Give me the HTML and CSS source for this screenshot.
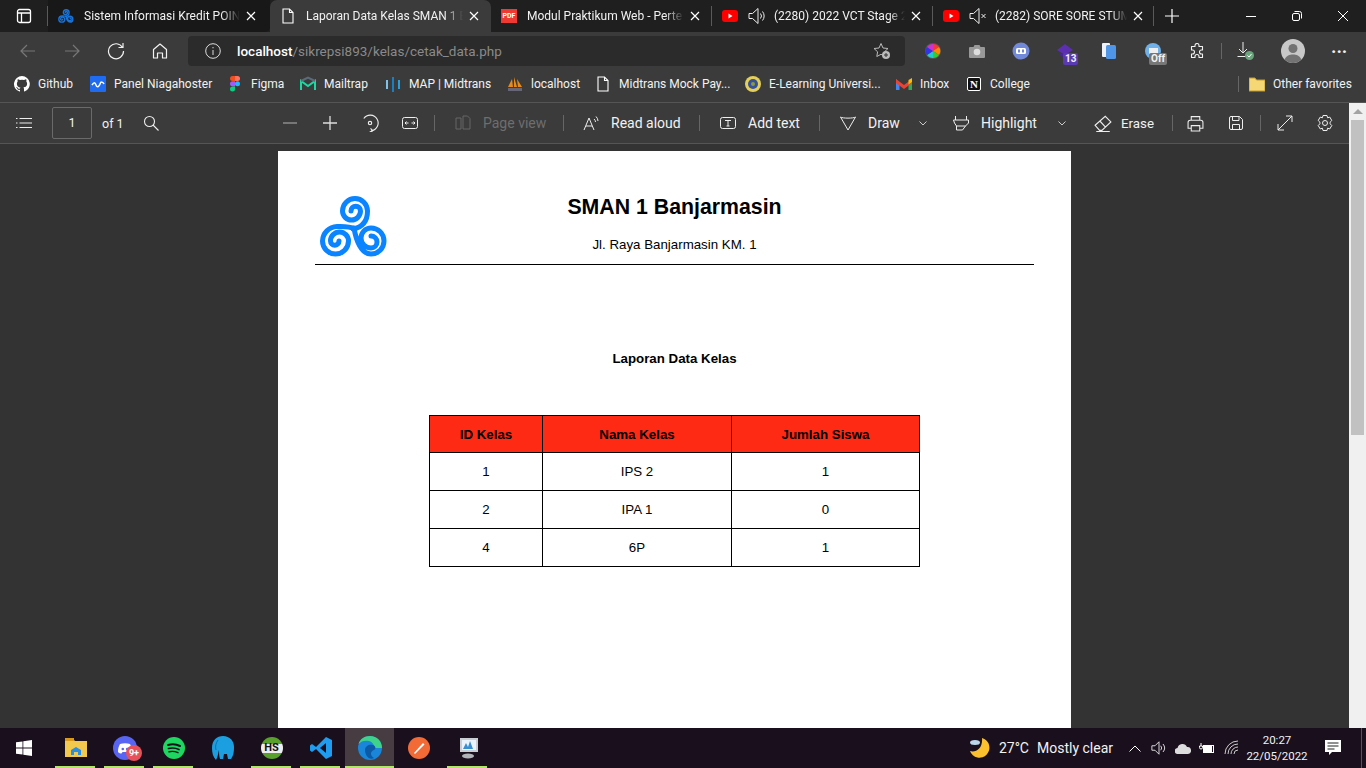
FILE: index.html
```html
<!DOCTYPE html>
<html lang="en">
<head>
  <meta charset="UTF-8">
  <title>Laporan Data Kelas SMAN 1 Banjarmasin</title>
  <link rel="stylesheet" href="styles.css">
</head>
<body>
  <!-- Tab strip -->
  <div class="tabstrip">
    <div class="win-btn"><svg width="16" height="16" viewBox="0 0 16 16" fill="none" stroke="#fff" stroke-width="1.3"><rect x="1.5" y="1.5" width="13" height="13" rx="2"/><path d="M1.5 5h13M5.5 5v9.5"/></svg></div>
    <span class="tab-sep"></span>
    <div class="tab tab-first">
      <svg class="tab-icon" viewBox="0 0 70 64" fill="none" stroke="#1a73d8" stroke-width="6" stroke-linecap="round"><path d="M34 34C44 32 48.5 26 48.5 17A12.5 12.5 0 0 0 23.5 17A9 9 0 0 0 41.5 17A4.75 4.75 0 0 0 32 17"/><path d="M36 34C30 31 24 31.5 18 31.5A15 15 0 0 0 3.5 46A13 13 0 0 0 29.5 46A9 9 0 0 0 11.5 46A4.25 4.25 0 0 0 20 46"/><path d="M35 33C37 45 42 59 52 59A13 13 0 0 0 52 33A10 10 0 0 0 52 53A6 6 0 0 0 52 41"/></svg>
      <span class="tab-title">Sistem Informasi Kredit POIN</span>
      <svg class="tab-close" viewBox="0 0 10 10" stroke="#fff" stroke-width="1.2"><path d="M1 1l8 8M9 1L1 9"/></svg>
    </div>
    <div class="tab tab-active">
      <svg class="tab-icon" viewBox="0 0 16 16" fill="none" stroke="#fff" stroke-width="1.1"><path d="M3 1h6.5L13 4.5V15H3zM9.5 1v3.5H13"/></svg>
      <span class="tab-title">Laporan Data Kelas SMAN 1 B</span>
      <svg class="tab-close" viewBox="0 0 10 10" stroke="#fff" stroke-width="1.2"><path d="M1 1l8 8M9 1L1 9"/></svg>
    </div>
    <div class="tab">
      <span class="pdf-icon">PDF</span>
      <span class="tab-title">Modul Praktikum Web - Perte</span>
      <svg class="tab-close" viewBox="0 0 10 10" stroke="#fff" stroke-width="1.2"><path d="M1 1l8 8M9 1L1 9"/></svg>
    </div>
    <span class="tab-sep"></span>
    <div class="tab">
      <svg class="tab-icon" viewBox="0 0 16 12"><rect width="16" height="12" rx="3" fill="#f00"/><path d="M6.5 3.5v5l4-2.5z" fill="#fff"/></svg>
      <svg class="tab-audio" viewBox="0 0 18 18" fill="none" stroke="#eee" stroke-width="1"><path d="M1 6.5h3.5L10 1.5v15l-5.5-5H1zM12.5 6.5a4 4 0 0 1 0 5M14.5 4.5a7 7 0 0 1 0 9"/></svg>
      <span class="tab-title">(2280) 2022 VCT Stage 2</span>
      <svg class="tab-close" viewBox="0 0 10 10" stroke="#fff" stroke-width="1.2"><path d="M1 1l8 8M9 1L1 9"/></svg>
    </div>
    <span class="tab-sep"></span>
    <div class="tab tab-last">
      <svg class="tab-icon" viewBox="0 0 16 12"><rect width="16" height="12" rx="3" fill="#f00"/><path d="M6.5 3.5v5l4-2.5z" fill="#fff"/></svg>
      <svg class="tab-audio" viewBox="0 0 18 18" fill="none" stroke="#eee" stroke-width="1"><path d="M1 6.5h3.5L10 1.5v15l-5.5-5H1zM12.5 7l4 4M16.5 7l-4 4"/></svg>
      <span class="tab-title">(2282) SORE SORE STUM</span>
      <svg class="tab-close" viewBox="0 0 10 10" stroke="#fff" stroke-width="1.2"><path d="M1 1l8 8M9 1L1 9"/></svg>
    </div>
    <span class="tab-sep"></span>
    <div class="new-tab"><svg width="16" height="16" viewBox="0 0 16 16" stroke="#fff" stroke-width="1.2"><path d="M8 1v14M1 8h14"/></svg></div>
    <div class="win-controls">
      <div class="win-control"><svg width="12" height="12" viewBox="0 0 12 12" stroke="#fff"><path d="M1 6.5h10"/></svg></div>
      <div class="win-control"><svg width="12" height="12" viewBox="0 0 12 12" fill="none" stroke="#fff"><rect x="1.5" y="3.5" width="7" height="7" rx="1.5"/><path d="M3.5 1.5h5a2 2 0 0 1 2 2v5"/></svg></div>
      <div class="win-control"><svg width="12" height="12" viewBox="0 0 12 12" stroke="#fff"><path d="M1 1l10 10M11 1L1 11"/></svg></div>
    </div>
  </div>

  <!-- Address bar row -->
  <div class="navbar">
    <div class="nav-btn"><svg width="18" height="18" viewBox="0 0 18 18" fill="none" stroke="#777" stroke-width="1.2"><path d="M16 9H2M8 3L2 9l6 6"/></svg></div>
    <div class="nav-btn"><svg width="18" height="18" viewBox="0 0 18 18" fill="none" stroke="#777" stroke-width="1.2"><path d="M2 9h14M10 3l6 6-6 6"/></svg></div>
    <div class="nav-btn"><svg width="18" height="18" viewBox="0 0 18 18" fill="none" stroke="#f2f2f2" stroke-width="1.2"><path d="M15.5 5.5A7.5 7.5 0 1 0 16.5 9M16 1v4.5h-4.5"/></svg></div>
    <div class="nav-btn"><svg width="18" height="18" viewBox="0 0 18 18" fill="none" stroke="#f2f2f2" stroke-width="1.2"><path d="M2.5 7.5L9 2l6.5 5.5V16h-4v-5h-5v5h-4z" stroke-linejoin="round"/></svg></div>
    <div class="address">
      <svg class="address-info" width="16" height="16" viewBox="0 0 16 16" fill="none" stroke="#ddd"><circle cx="8" cy="8" r="7.3"/><path d="M8 7v5M8 4v1.3"/></svg>
      <span class="url"><b>localhost</b>/sikrepsi893/kelas/cetak_data.php</span>
      <svg class="address-star" width="18" height="18" viewBox="0 0 18 18" fill="none" stroke="#bbb"><path d="M8 1.5l2 4.5 5 .5-3.5 3.3.6 4.7L8 12.3 3.8 14.5l.8-4.7L1 6.5l5-.5z"/><circle cx="13" cy="13" r="4" fill="#bbb" stroke="none"/><path d="M13 11v4M11 13h4" stroke="#333"/></svg>
    </div>
    <div class="ext"><svg width="18" height="18" viewBox="0 0 18 18"><circle cx="9" cy="9" r="8" fill="#555"/><path d="M9 9V2a7 7 0 0 1 6 3z" fill="#f33"/><path d="M9 9l6-4a7 7 0 0 1 0 8z" fill="#f80"/><path d="M9 9l6 4a7 7 0 0 1-6 3z" fill="#3c3"/><path d="M9 9v7a7 7 0 0 1-6-3z" fill="#2cc"/><path d="M9 9l-6 4a7 7 0 0 1 0-8z" fill="#33e"/><path d="M9 9L3 5a7 7 0 0 1 6-3z" fill="#c3c"/></svg></div>
    <div class="ext"><svg width="16" height="14" viewBox="0 0 16 14"><path d="M1 3h3.5l1-2h5l1 2H15a1 1 0 0 1 1 1v9a1 1 0 0 1-1 1H1a1 1 0 0 1-1-1V4a1 1 0 0 1 1-1z" fill="#999"/><circle cx="8" cy="8" r="3.3" fill="#ddd"/></svg></div>
    <div class="ext"><svg width="18" height="18" viewBox="0 0 18 18"><circle cx="9" cy="9" r="8.5" fill="#7289da"/><rect x="4" y="6" width="10" height="6" rx="1.5" fill="#fff"/><rect x="6" y="7.5" width="2" height="3" fill="#7289da"/><rect x="10" y="7.5" width="2" height="3" fill="#7289da"/></svg></div>
    <div class="ext"><svg width="16" height="14" viewBox="0 0 16 14"><path d="M8 0l8 6-8 5-8-5z" fill="#5b2fb0"/><path d="M3 8.5v3l5 2.5 5-2.5v-3l-5 3z" fill="#4a2596"/></svg><span class="badge-purple">13</span></div>
    <div class="ext"><svg width="14" height="16" viewBox="0 0 14 16"><rect width="8" height="14" rx="1" fill="#eef3fb"/><rect x="4" y="2" width="10" height="14" rx="1.5" fill="#4f95e8"/></svg></div>
    <div class="ext"><svg width="16" height="16" viewBox="0 0 16 16"><circle cx="8" cy="8" r="8" fill="#6fb1e8"/><rect x="4" y="5" width="9" height="6" fill="#eee"/></svg><span class="badge-off">Off</span></div>
    <div class="ext"><svg width="16" height="16" viewBox="0 0 16 16" fill="none" stroke="#f2f2f2" stroke-width="1.1"><path d="M6 2.5a2 2 0 0 1 4 0V3.5h3.5V7h-1a2 2 0 0 0 0 4h1v3.5H10v-1a2 2 0 0 0-4 0v1H2.5V11h1a2 2 0 0 0 0-4h-1V3.5H6z" stroke-linejoin="round"/></svg></div>
    <span class="nav-sep"></span>
    <div class="nav-download"><svg width="18" height="20" viewBox="0 0 18 20" fill="none" stroke="#eee"><path d="M6 1v11M2 8l4 4 4-4M0.5 15.5h8"/><circle cx="12.5" cy="14.5" r="4.5" fill="#6aa67c" stroke="none"/><path d="M10.5 14.5l1.5 1.5 2.5-3" stroke="#fff"/></svg></div>
    <div class="avatar"><svg width="24" height="24" viewBox="0 0 24 24"><circle cx="12" cy="12" r="12" fill="#c8c8c8"/><circle cx="12" cy="9.5" r="4.5" fill="#737373"/><path d="M3.5 20.5c2-4 5-5 8.5-5s6.5 1 8.5 5a12 12 0 0 1-17 0z" fill="#737373"/></svg></div>
    <div class="dots">···</div>
  </div>

  <!-- Favorites -->
  <div class="favbar">
    <div class="fav"><svg class="fav-icon" viewBox="0 0 16 16"><path fill="#fff" d="M8 0a8 8 0 0 0-2.5 15.6c.4.1.5-.2.5-.4v-1.4c-2.2.5-2.7-1-2.7-1-.4-.9-.9-1.2-.9-1.2-.7-.5.1-.5.1-.5.8.1 1.2.8 1.2.8.7 1.2 1.9.9 2.3.7.1-.5.3-.9.5-1.1-1.8-.2-3.6-.9-3.6-4 0-.9.3-1.6.8-2.1-.1-.2-.4-1 .1-2.1 0 0 .7-.2 2.2.8a7.6 7.6 0 0 1 4 0c1.5-1 2.2-.8 2.2-.8.4 1.1.2 1.9.1 2.1.5.6.8 1.3.8 2.1 0 3.1-1.9 3.7-3.7 3.9.3.3.6.7.6 1.5v2.2c0 .2.1.5.6.4A8 8 0 0 0 8 0z"/></svg><span>Github</span></div>
    <div class="fav"><svg class="fav-icon" viewBox="0 0 16 16" fill="none"><rect width="16" height="16" rx="1" fill="#1f6cf2"/><path d="M2 9c2-3 3-3 4 0s3 2 4-1 3-2 4 0" stroke="#fff" stroke-width="1.5"/></svg><span>Panel Niagahoster</span></div>
    <div class="fav"><svg class="fav-icon" viewBox="0 0 16 16"><path d="M5.5 0H8v5H5.5a2.5 2.5 0 0 1 0-5z" fill="#f24e1e"/><path d="M8 0h2.5a2.5 2.5 0 0 1 0 5H8z" fill="#ff7262"/><path d="M8 5.3H5.5a2.5 2.5 0 0 0 0 5H8z" fill="#a259ff"/><circle cx="10.5" cy="7.8" r="2.5" fill="#1abcfe"/><path d="M8 10.6H5.5a2.5 2.5 0 1 0 2.5 2.5z" fill="#0acf83"/></svg><span>Figma</span></div>
    <div class="fav"><svg class="fav-icon" viewBox="0 0 16 16" fill="none" stroke-width="2"><path d="M1 14V5l7 5 7-5v9" stroke="#1ed7a2"/><path d="M1 5l7-3.5L15 5" stroke="#5a6c78"/></svg><span>Mailtrap</span></div>
    <div class="fav"><svg class="fav-icon" viewBox="0 0 16 16"><rect x="1" y="4" width="2" height="9" fill="#7fc1ea"/><rect x="7" y="1" width="2" height="15" fill="#1a7fc1"/><rect x="13" y="4" width="2" height="9" fill="#2b9fdb"/></svg><span>MAP | Midtrans</span></div>
    <div class="fav"><svg class="fav-icon" viewBox="0 0 16 16"><path d="M1 11L5 3l1 8zM7 11V1l3 10zM11 11l-1-8 5 8z" fill="#e88a1a"/><rect x="1" y="12" width="14" height="3" fill="#667"/></svg><span>localhost</span></div>
    <div class="fav"><svg class="fav-icon" viewBox="0 0 16 16" fill="none" stroke="#fff" stroke-width="1.1"><path d="M3 1h6.5L13 4.5V15H3zM9.5 1v3.5H13"/></svg><span>Midtrans Mock Pay...</span></div>
    <div class="fav"><svg class="fav-icon" viewBox="0 0 16 16"><circle cx="8" cy="8" r="8" fill="#e3cf5a"/><circle cx="8" cy="8" r="5" fill="#35509c"/><circle cx="8" cy="8" r="2" fill="#8a9a3c"/></svg><span>E-Learning Universi...</span></div>
    <div class="fav"><svg class="fav-icon" viewBox="0 0 16 14"><path d="M0 2v11h3.5V6z" fill="#4285f4"/><path d="M16 2v11h-3.5V6z" fill="#34a853"/><path d="M0 2l8 6 8-6v4l-8 6-8-6z" fill="#ea4335"/><path d="M12.5 3L16 1v4l-3.5 2.5z" fill="#fbbc04"/></svg><span>Inbox</span></div>
    <div class="fav"><span class="notion">N</span><span>College</span></div>
    <span class="fav-sep"></span>
    <div class="fav fav-other"><svg class="fav-icon" viewBox="0 0 16 14"><path d="M0 1h6l1.5 2H16v11H0z" fill="#f6d776" stroke="#c49a2c"/></svg><span>Other favorites</span></div>
  </div>

  <div class="viewer">
    <div class="viewer-main">
      <!-- PDF toolbar -->
      <div class="pdfbar">
        <div class="pdf-btn"><svg width="16" height="12" viewBox="0 0 16 12" stroke="#eee"><path d="M3.5 1.5H16M3.5 6H16M3.5 10.5H16M0 1.5h1.5M0 6h1.5M0 10.5h1.5"/></svg></div>
        <div class="page-input">1</div>
        <div class="page-of">of 1</div>
        <div class="pdf-btn"><svg width="16" height="16" viewBox="0 0 16 16" fill="none" stroke="#eee" stroke-width="1.1"><circle cx="6.5" cy="6.5" r="5"/><path d="M10 10l5.5 5.5"/></svg></div>
        <span></span>
        <div class="pdf-btn"><svg width="16" height="16" viewBox="0 0 16 16" stroke="#999" stroke-width="1.3"><path d="M1 8h14"/></svg></div>
        <div class="pdf-btn"><svg width="16" height="16" viewBox="0 0 16 16" stroke="#ddd" stroke-width="1.3"><path d="M8 1v14M1 8h14"/></svg></div>
        <div class="pdf-btn"><svg width="18" height="18" viewBox="0 0 16 16" fill="none" stroke="#eee" stroke-width="1"><path d="M9 15A7 7 0 1 0 2.5 4M10.5 15l-2-2.2M10.5 15L7.7 16"/><circle cx="8" cy="8" r="1.5"/></svg></div>
        <div class="pdf-btn"><svg width="16" height="14" viewBox="0 0 16 14" fill="none" stroke="#eee"><rect x=".5" y="1.5" width="15" height="11" rx="2"/><path d="M3 7h3.5M9.5 7H13M3 7l1.5-1.5M3 7l1.5 1.5M13 7l-1.5-1.5M13 7l-1.5 1.5"/></svg></div>
        <span class="pdf-sep sep-a"></span>
        <div class="pdf-tool disabled"><svg width="16" height="16" viewBox="0 0 16 16" fill="none" stroke="#666"><path d="M1 3h5v11H1zM8 1h4.5L15 3.5V14H8z"/></svg><span>Page view</span></div>
        <span class="pdf-sep"></span>
        <div class="pdf-tool tool-read"><svg width="18" height="16" viewBox="0 0 16 16" fill="none" stroke="#eee"><path d="M1 15L6 3l5 12M3 11h6M11 4a4 4 0 0 1 1.5 3M13 1.5a7 7 0 0 1 2 4.5"/></svg><span>Read aloud</span></div>
        <span class="pdf-sep"></span>
        <div class="pdf-tool"><svg width="16" height="14" viewBox="0 0 16 14" fill="none" stroke="#eee"><rect x=".5" y="1.5" width="15" height="11" rx="2"/><path d="M5 4.5h6M8 4.5v5.5M6.5 10h3"/></svg><span>Add text</span></div>
        <span class="pdf-sep"></span>
        <div class="pdf-tool"><svg width="16" height="16" viewBox="0 0 16 16" fill="none" stroke="#eee"><path d="M.5 2L8 15 15.5 2M.5 2c2 1.5 13 1.5 15 0"/></svg><span>Draw</span></div>
        <svg class="chevron" width="8" height="5" viewBox="0 0 8 5" fill="none" stroke="#ccc"><path d="M.5.5L4 4 7.5.5"/></svg>
        <div class="pdf-tool"><svg width="16" height="16" viewBox="0 0 16 16" fill="none" stroke="#eee"><path d="M2.5 1v4M13.5 1v4M.5 5h15v3l-3 3H3.5L1.500 8zM3.5 11v4h6l3-4"/></svg><span>Highlight</span></div>
        <svg class="chevron chevron-b" width="8" height="5" viewBox="0 0 8 5" fill="none" stroke="#ccc"><path d="M.5.5L4 4 7.5.5"/></svg>
        <div class="pdf-tool tool-erase"><svg width="18" height="18" viewBox="0 0 16 16" fill="none" stroke="#eee"><path d="M1 10l9-8 5 5-8 7.5H5zM5 6l5 5.5M2 15.5h12"/></svg><span>Erase</span></div>
        <span class="pdf-sep"></span>
        <div class="pdf-icon-btn"><svg width="17" height="17" viewBox="0 0 16 16" fill="none" stroke="#eee"><path d="M4 5V1.5h8V5M4 12.5H1V7a2 2 0 0 1 2-2h10a2 2 0 0 1 2 2v5.5h-3M4 10h8v5H4z"/></svg></div>
        <div class="pdf-icon-btn"><svg width="16" height="16" viewBox="0 0 16 16" fill="none" stroke="#eee"><path d="M1.500 3a1.500 1.500 0 0 1 1.500-1.500h8.500l3 3V13a1.500 1.500 0 0 1-1.500 1.500H3A1.500 1.500 0 0 1 1.500 13zM4.500 1.500v4h6.500v-4M4.500 14.500V9.500h7v5"/></svg></div>
        <span class="pdf-sep"></span>
        <div class="pdf-icon-btn"><svg width="16" height="16" viewBox="0 0 16 16" fill="none" stroke="#eee"><path d="M1 15L15 1M9 1h6v6M1 9v6h6"/></svg></div>
        <div class="pdf-icon-btn"><svg width="18" height="18" viewBox="0 0 18 18" fill="none" stroke="#eee"><path d="M7 1.5h4l.6 2.3 2.2-.7 2 3.4-1.700 1.700v1.600l1.700 1.700-2 3.400-2.200-.7-.6 2.300H7l-.6-2.300-2.200.7-2-3.400 1.700-1.700V8.200L2.200 6.500l2-3.400 2.200.7z" stroke-linejoin="round"/><circle cx="9" cy="9" r="2.5"/></svg></div>
      </div>

      <!-- Document area -->
      <div class="doc-area">
        <div class="page">
          <div class="kop">
            <svg class="logo" width="70" height="64" viewBox="0 0 70 64" fill="none" stroke="#0a84ff" stroke-width="5" stroke-linecap="round"><path d="M34 34C44 32 48.5 26 48.5 16A12.5 12.5 0 0 0 23.5 16A9 9 0 0 0 41.5 16A4.75 4.75 0 0 0 32 16"/><path d="M36 34C30 31 24 31.5 18 31.5A15 15 0 0 0 3.5 46A13 13 0 0 0 29.5 46A9 9 0 0 0 11.5 46A4.25 4.25 0 0 0 20 46"/><path d="M35 33C37 45 42 59 52 59A13 13 0 0 0 52 33A10 10 0 0 0 52 53A6 6 0 0 0 52 41"/></svg>
            <div class="kop-text">
              <h1>SMAN 1 Banjarmasin</h1>
              <p>Jl. Raya Banjarmasin KM. 1</p>
            </div>
          </div>
          <h2>Laporan Data Kelas</h2>
          <table>
            <thead>
              <tr><th>ID Kelas</th><th>Nama Kelas</th><th>Jumlah Siswa</th></tr>
            </thead>
            <tbody>
              <tr><td>1</td><td>IPS 2</td><td>1</td></tr>
              <tr><td>2</td><td>IPA 1</td><td>0</td></tr>
              <tr><td>4</td><td>6P</td><td>1</td></tr>
            </tbody>
          </table>
        </div>
      </div>
    </div>
    <div class="scrollbar">
      <span class="scroll-up"></span>
      <div class="scroll-thumb"></div>
    </div>
  </div>

  <!-- Windows taskbar -->
  <div class="taskbar">
    <div class="task-start"><svg width="16" height="16" viewBox="0 0 16 16" fill="#fff"><path d="M0 2.3l6.5-.9v6.2H0zM7.3 1.3L16 0v7.600H7.3zM0 8.4h6.5v6.200L0 13.7zM7.3 8.4H16V16l-8.7-1.300z"/></svg></div>
    <div class="task-app running"><svg width="22" height="20" viewBox="0 0 22 20"><path d="M0 1h8l2 2h12v16H0z" fill="#f2c94c"/><rect y="0" width="9" height="3" fill="#d99a1c"/><path d="M6 12l5-3 5 3v5h-3v-3H9v3H6z" fill="#2a8fe0"/></svg></div>
    <div class="task-app running"><span class="discord"><svg width="14" height="11" viewBox="0 0 14 11"><path d="M2 1c3-1 7-1 10 0 1.5 2.5 2 5 2 8-1 1-2.500 1.500-3.500 1.500L9.500 9h-5L3.500 10.500C2.500 10.500 1 10 0 9c0-3 .5-5.500 2-8z" fill="#fff"/><circle cx="4.8" cy="6" r="1.3" fill="#5865f2"/><circle cx="9.2" cy="6" r="1.3" fill="#5865f2"/></svg></span><span class="discord-badge">9+</span></div>
    <div class="task-app running"><svg width="22" height="22" viewBox="0 0 22 22" fill="none" stroke="#10131a" stroke-linecap="round"><circle cx="11" cy="11" r="11" fill="#1ed760" stroke="none"/><path d="M5 8c4-1 8-1 12 1" stroke-width="2"/><path d="M5.5 11.5c4-1 7-.7 10.500 1" stroke-width="1.7"/><path d="M6 14.8c3-.7 6-.5 9 .9" stroke-width="1.4"/></svg></div>
    <div class="task-app"><svg width="24" height="26" viewBox="0 0 24 26"><path d="M1 13C1 5 6 1 12 1c7 0 11 5 11 11 0 6-1 9-3 12h-3l-1-5h-3l-1 5H9c-1-3-1-6-1-9-1 3-1 7-3 10C2 22 1 18 1 13z" fill="#1c9fe0"/><path d="M7 5c-2 3-3 6-2 10" stroke="#0d6fae" fill="none"/></svg></div>
    <div class="task-app running"><span class="heidi">HS</span></div>
    <div class="task-app running"><svg width="24" height="24" viewBox="0 0 24 24"><path d="M17 1l6 3v16l-6 3-10-10-4 3-2-1.5V9.5L3 8l4 3zM17 7l-6 5 6 5z" fill="#1f9cf0"/></svg></div>
    <div class="task-app task-active"><svg width="24" height="24" viewBox="0 0 24 24"><circle cx="12" cy="12" r="12" fill="#1a86d9"/><path d="M24 12c0-7-5-12-12-12C6 0 2 3 .5 8 3 5 7 4 11 5c4 1 6 5 5 7h8z" fill="#3fd28a"/><path d="M7 14c0-4 4-6 8-5 3 1 3 4 1 5-3 1-5 5 0 8-5 3-9-3-9-8z" fill="#0c5aa6"/></svg></div>
    <div class="task-app"><svg width="22" height="22" viewBox="0 0 22 22"><circle cx="11" cy="11" r="11" fill="#f26a36"/><path d="M6 16L15 6l1.5 1.5L7 17z" fill="#fff"/></svg></div>
    <div class="task-app running"><svg width="24" height="24" viewBox="0 0 24 24"><rect x="4" y="2" width="18" height="14" fill="#c9ced3"/><rect x="6" y="4" width="14" height="10" fill="#eaf3fb"/><path d="M7 13l3-6 2 4 2-6 3 8z" fill="#3a8fd0"/><ellipse cx="12" cy="20" rx="6" ry="2.5" fill="#b0b4b8"/></svg></div>
    <div class="tray">
      <svg class="tray-moon" width="20" height="20" viewBox="0 0 20 20"><path d="M12 0a10 10 0 1 1-12 13c6 2 13-3 12-13z" fill="#fbc02d"/><ellipse cx="5" cy="4.5" rx="5" ry="2.5" fill="#bcd6ea"/></svg>
      <span class="tray-temp">27°C</span>
      <span class="tray-weather">Mostly clear</span>
      <svg class="tray-chevron" width="12" height="7" viewBox="0 0 12 7" fill="none" stroke="#fff"><path d="M.5 6.5L6 1l5.5 5.5"/></svg>
      <svg class="tray-icon tray-speaker" width="16" height="16" viewBox="0 0 18 18" fill="none" stroke="#eee"><path d="M1 6.5h3.5L9 2v14l-4.5-4.5H1zM11 6.5a4 4 0 0 1 0 5M13.5 4.5a7 7 0 0 1 0 9" stroke-width="1"/></svg>
      <svg class="tray-icon" width="16" height="11" viewBox="0 0 16 11"><path d="M3 11a3 3 0 0 1-.5-6A5 5 0 0 1 12 4a3.5 3.5 0 0 1 1 7z" fill="#ddd"/></svg>
      <svg class="tray-icon" width="16" height="12" viewBox="0 0 16 12" fill="none" stroke="#fff"><rect x="4.5" y="3.5" width="10" height="7"/><rect x="5.5" y="4.5" width="7" height="5" fill="#fff"/><path d="M2 1v3M0.5 4h3v1.5a1.5 1.5 0 0 1-3 0z"/></svg>
      <svg class="tray-icon tray-wifi" width="16" height="16" viewBox="0 0 16 16" fill="none" stroke="#ccc"><path d="M1 14A13 13 0 0 1 14 1M4 14A10 10 0 0 1 14 4M7 14a7 7 0 0 1 7-7M10 14a4 4 0 0 1 4-4"/></svg>
      <div class="clock"><span>20:27</span><span>22/05/2022</span></div>
      <svg class="tray-notif" width="16" height="16" viewBox="0 0 16 16"><path d="M0 0h16v12H7l-3 3v-3H0z" fill="#fff"/><path d="M2.5 3h11M2.5 6h11M2.5 9h7" stroke="#222"/></svg>
      <span class="show-desktop"></span>
    </div>
  </div>
</body>
</html>
```

FILE: styles.css
```css
/* Reset some default styles */
body, h1, h2, p {
  margin: 0;
  padding: 0;
}

body {
  width: 1366px;
  height: 768px;
  overflow: hidden;
  display: flex;
  flex-direction: column;
  font-family: Roboto, "Noto Sans", sans-serif;
  font-size: 12px;
  color: #f2f2f2;
  background-color: #333;
}

/* Tab strip */
.tabstrip {
  height: 32px;
  flex: none;
  display: flex;
  align-items: center;
  background-color: #1f1f1f;
}

.win-btn {
  width: 47px;
  display: flex;
  justify-content: center;
}

.tab-sep {
  width: 1px;
  height: 20px;
  background-color: #5a5a5a;
  flex: none;
}

.tab {
  width: 220px;
  height: 32px;
  flex: none;
  display: flex;
  align-items: center;
  padding: 0 5px 0 10px;
  box-sizing: border-box;
}

.tab-first {
  width: 222px;
  padding-right: 8px;
  background-color: #181818;
  border-bottom-right-radius: 5px;
}

.tab-active {
  width: 221px;
  padding-right: 6px;
  background-color: #3b3b3b;
  border-radius: 7px 7px 0 0;
}

.tab-last {
  padding-right: 4px;
}

.tab-icon {
  width: 16px;
  height: 16px;
  flex: none;
  margin-right: 10px;
}

.tab-audio {
  width: 18px;
  height: 18px;
  flex: none;
  margin: 0 8px 0 0;
}

.pdf-icon {
  width: 16px;
  height: 14px;
  flex: none;
  margin-right: 10px;
  background-color: #ee3a33;
  color: #fff;
  font-size: 7px;
  font-weight: bold;
  line-height: 14px;
  text-align: center;
}

.tab-title {
  flex: 1;
  min-width: 0;
  white-space: nowrap;
  -webkit-mask-image: linear-gradient(to right, #000 88%, transparent 100%);
  mask-image: linear-gradient(to right, #000 88%, transparent 100%);
}

.tab-close {
  width: 10px;
  height: 10px;
  flex: none;
  margin: 0 6px 0 6px;
}

.new-tab {
  width: 36px;
  display: flex;
  justify-content: center;
}

.win-controls {
  margin-left: auto;
  display: flex;
}

.win-control {
  width: 46px;
  display: flex;
  justify-content: center;
}

/* Address bar row */
.navbar {
  height: 38px;
  flex: none;
  display: flex;
  align-items: center;
  padding-left: 6px;
  box-sizing: border-box;
  background-color: #3b3b3b;
}

.nav-btn {
  width: 44px;
  display: flex;
  justify-content: center;
}

.address {
  width: 717px;
  height: 30px;
  margin: 0 6px 0 6px;
  display: flex;
  align-items: center;
  padding: 0 14px 0 17px;
  box-sizing: border-box;
  border-radius: 4px;
  background-color: #2b2b2b;
  font-size: 13.5px;
  color: #8a8a8a;
}

.address-info {
  margin-right: 16px;
}

.url b {
  font-weight: 500;
  color: #fff;
}

.address-star {
  margin-left: auto;
}

.ext {
  width: 44px;
  display: flex;
  justify-content: center;
  align-items: center;
  position: relative;
}

.badge-purple, .badge-off {
  position: absolute;
  height: 12px;
  padding: 0 2px;
  border-radius: 2px;
  font-size: 10px;
  font-weight: bold;
  line-height: 12px;
}

.badge-purple {
  top: 9px;
  left: 20px;
  background-color: #5a3ab0;
}

.badge-off {
  top: 10px;
  left: 18px;
  background-color: #777;
}

.nav-sep {
  width: 1px;
  height: 16px;
  margin: 0 15px 0 2px;
  background-color: #666;
}

.nav-download {
  width: 18px;
  display: flex;
}

.avatar {
  margin-left: 26px;
  display: flex;
}

.dots {
  margin-left: 26px;
  font-size: 18px;
  font-weight: bold;
}

/* Favorites */
.favbar {
  height: 33px;
  flex: none;
  display: grid;
  grid-template-columns: 76px 137px 73px 85px 122px 88px 150px 151px 70px 272px 1px auto;
  align-items: center;
  padding: 0 0 5px 14px;
  box-sizing: border-box;
  background-color: #3b3b3b;
  border-bottom: 1px solid #555;
}

.fav {
  display: flex;
  align-items: center;
  white-space: nowrap;
}

.fav-icon {
  width: 16px;
  height: 16px;
  flex: none;
  margin-right: 8px;
}

.notion {
  width: 14px;
  height: 14px;
  margin: 0 9px 0 1px;
  flex: none;
  box-sizing: border-box;
  border: 1px solid #fff;
  border-radius: 2px;
  background-color: #111;
  color: #fff;
  font-family: "Liberation Serif", serif;
  font-size: 11px;
  font-weight: bold;
  line-height: 12px;
  text-align: center;
}

.fav-sep {
  width: 1px;
  height: 16px;
  background-color: #666;
  grid-column: 11;
}

.fav-other {
  margin-left: 10px;
}

/* Viewer: toolbar, document and its scrollbar */
.viewer {
  flex: 1;
  min-height: 0;
  display: flex;
}

.viewer-main {
  width: 1349px;
  display: flex;
  flex-direction: column;
}

.pdfbar {
  height: 41px;
  flex: none;
  display: grid;
  grid-template-columns: 48px 40px 39px 40px 99px 40px 40px 40px 40px 25px 108px 19px 117px 21px 99px 21px 71px 42px 99px 42px 78px 15px 41px 32px 17px 40px 16px;
  align-items: center;
  padding-left: 4px;
  box-sizing: border-box;
  background-color: #3b3b3b;
  border-bottom: 1px solid #555;
  font-size: 14px;
}

.pdf-btn {
  width: 40px;
  display: flex;
  justify-content: center;
}

.pdf-icon-btn {
  width: 16px;
  display: flex;
  justify-content: center;
}

.pdf-icon-btn svg {
  flex: none;
}

.page-input {
  width: 40px;
  height: 32px;
  box-sizing: border-box;
  border: 1px solid #6a6a6a;
  border-radius: 2px;
  font-size: 12.5px;
  line-height: 30px;
  text-align: center;
}

.page-of {
  padding-left: 10px;
  font-size: 12.5px;
}

.pdf-sep {
  width: 1px;
  height: 16px;
  background-color: #666;
}

.sep-a {
  margin-left: 4px;
}

.pdf-tool {
  display: flex;
  align-items: center;
  gap: 12px;
  white-space: nowrap;
}

.pdf-tool.disabled {
  color: #6e6e6e;
}

.tool-read {
  gap: 11px;
}

.tool-erase {
  gap: 9px;
  font-size: 13.3px;
}

.chevron {
  margin-left: 8px;
}

.chevron-b {
  margin-left: 6px;
}

.doc-area {
  flex: 1;
  min-height: 0;
  overflow: hidden;
  padding-top: 7px;
  background-color: #333;
}

.page {
  width: 793px;
  height: 800px;
  margin-left: 278px;
  padding: 36px 37px 0 37px;
  box-sizing: border-box;
  background-color: #fff;
  color: #000;
  font-family: "Liberation Sans", Arial, sans-serif;
  font-size: 13.3px;
}

.kop {
  display: grid;
  grid-template-columns: 1fr auto 1fr;
  height: 78px;
  box-sizing: border-box;
  border-bottom: 1px solid #000;
}

.logo {
  margin: 8px 0 0 4px;
}

.kop-text {
  text-align: center;
}

.kop h1 {
  margin-top: 6px;
  font-size: 21.3px;
  line-height: 28px;
}

.kop p {
  margin-top: 16px;
  line-height: 16px;
}

.page h2 {
  margin-top: 86px;
  font-size: 13.3px;
  line-height: 16px;
  text-align: center;
}

table {
  margin: 48px 0 0 114px;
  border-collapse: collapse;
  width: 491px;
  table-layout: fixed;
}

th, td {
  height: 38px;
  padding: 0;
  box-sizing: border-box;
  border: 1px solid #000;
  text-align: center;
}

th {
  height: 37px;
  background-color: #ff2a14;
}

th:nth-child(1) {
  width: 113px;
}

th:nth-child(2) {
  width: 189px;
}

.scrollbar {
  width: 17px;
  display: flex;
  flex-direction: column;
  align-items: center;
  background-color: #f0f0f0;
}

.scroll-up {
  margin-top: 6px;
  width: 0;
  height: 0;
  border-left: 5px solid transparent;
  border-right: 5px solid transparent;
  border-bottom: 5px solid #a3a3a3;
}

.scroll-thumb {
  width: 13px;
  height: 315px;
  margin-top: 6px;
  background-color: #c1c1c1;
}

/* Taskbar */
.taskbar {
  height: 40px;
  flex: none;
  display: flex;
  background-color: #1a0f1d;
  font-size: 14px;
}

.task-start {
  width: 51px;
  display: flex;
  justify-content: center;
  align-items: center;
  padding-right: 3px;
  box-sizing: border-box;
}

.task-app {
  width: 49px;
  display: flex;
  justify-content: center;
  align-items: center;
  box-sizing: border-box;
  position: relative;
}

.task-app.running::after {
  content: "";
  position: absolute;
  left: 4px;
  right: 5px;
  bottom: 0;
  height: 2px;
  background-color: #b4e36c;
}

.task-active {
  background-color: #463c42;
  box-shadow: inset 0 -2px 0 #b4e36c;
}

.discord {
  width: 24px;
  height: 24px;
  display: flex;
  justify-content: center;
  align-items: center;
  border-radius: 50%;
  background-color: #5865f2;
}

.discord-badge {
  position: absolute;
  left: 26px;
  top: 17px;
  width: 16px;
  height: 16px;
  border-radius: 50%;
  background-color: #e8515b;
  color: #fff;
  font-size: 9px;
  font-weight: bold;
  line-height: 16px;
  text-align: center;
}

.heidi {
  width: 22px;
  height: 22px;
  border-radius: 50%;
  background: linear-gradient(#5aa02c 30%, #eee 30%, #eee 75%, #5aa02c 75%);
  color: #111;
  font-size: 11px;
  font-weight: bold;
  line-height: 22px;
  text-align: center;
}

.tray {
  margin-left: auto;
  display: flex;
  align-items: center;
}

.tray-temp {
  margin-left: 9px;
}

.tray-weather {
  margin-left: 8px;
}

.tray-chevron {
  margin-left: 16px;
}

.tray-icon {
  margin-left: 8px;
}

.tray-speaker {
  margin-left: 10px;
}

.tray-wifi {
  margin-left: 9px;
}

.clock {
  width: 70px;
  margin-left: 2px;
  display: flex;
  flex-direction: column;
  align-items: center;
  font-size: 11.5px;
  line-height: 16px;
}

.tray-notif {
  margin-left: 13px;
}

.show-desktop {
  width: 1px;
  height: 40px;
  margin: 0 4px 0 20px;
  background-color: #555;
}
```
